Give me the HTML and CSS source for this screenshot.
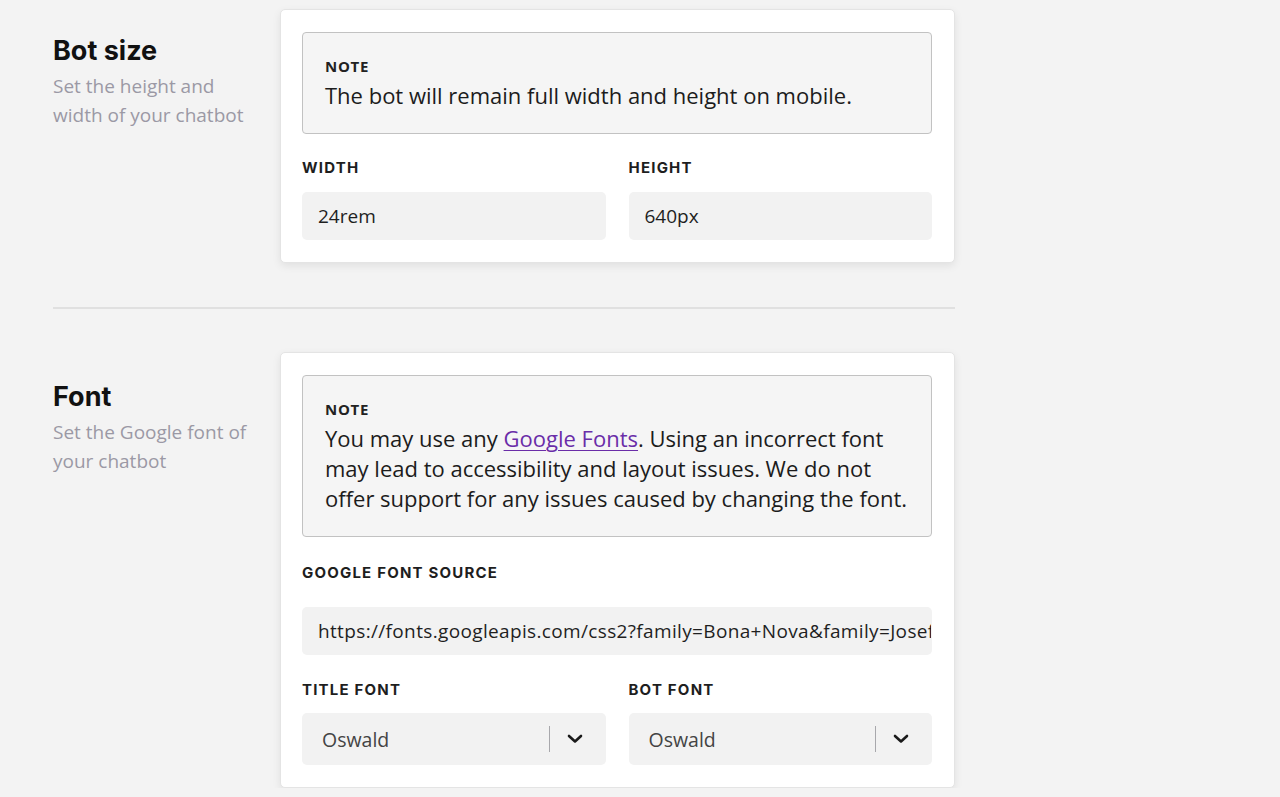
FILE: index.html
```html
<!DOCTYPE html>
<html lang="en">
<head>
<meta charset="utf-8">
<title>Chatbot settings</title>
<link rel="stylesheet" href="styles.css">
</head>
<body>
<main class="page">
  <section class="section section-first">
    <div class="intro">
      <h2 class="intro-title">Bot size</h2>
      <p class="intro-text">Set the height and width of your chatbot</p>
    </div>
    <div class="card">
      <div class="note">
        <div class="note-label">NOTE</div>
        <div class="note-text">The bot will remain full width and height on mobile.</div>
      </div>
      <div class="row row-size">
        <div class="field">
          <label class="label label-tight">WIDTH</label>
          <input class="input" type="text" value="24rem">
        </div>
        <div class="field">
          <label class="label label-tight">HEIGHT</label>
          <input class="input" type="text" value="640px">
        </div>
      </div>
    </div>
  </section>

  <hr class="divider">

  <section class="section section-second">
    <div class="intro intro-second">
      <h2 class="intro-title">Font</h2>
      <p class="intro-text">Set the Google font of your chatbot</p>
    </div>
    <div class="card">
      <div class="note">
        <div class="note-label">NOTE</div>
        <div class="note-text">You may use any <a class="link" href="#">Google Fonts</a>. Using an incorrect font may lead to accessibility and layout issues. We do not offer support for any issues caused by changing the font.</div>
      </div>
      <div class="field field-full">
        <label class="label label-url">GOOGLE FONT SOURCE</label>
        <input class="input input-url" type="text" value="https://fonts.googleapis.com/css2?family=Bona+Nova&family=Josefin+Sans&display=swap">
      </div>
      <div class="row row-fonts">
        <div class="field">
          <label class="label label-select">TITLE FONT</label>
          <div class="select">
            <span class="select-value">Oswald</span>
            <span class="select-sep"></span>
            <svg class="chevron" width="16" height="10" viewBox="0 0 16 10"><path d="M2 2l6 5.5L14 2" fill="none" stroke="#1a1a1a" stroke-width="2.6" stroke-linecap="round" stroke-linejoin="round"/></svg>
          </div>
        </div>
        <div class="field">
          <label class="label label-select">BOT FONT</label>
          <div class="select">
            <span class="select-value">Oswald</span>
            <span class="select-sep"></span>
            <svg class="chevron" width="16" height="10" viewBox="0 0 16 10"><path d="M2 2l6 5.5L14 2" fill="none" stroke="#1a1a1a" stroke-width="2.6" stroke-linecap="round" stroke-linejoin="round"/></svg>
          </div>
        </div>
      </div>
    </div>
  </section>
</main>
</body>
</html>
```

FILE: styles.css
```css
* { box-sizing: border-box; }

html, body {
  margin: 0;
  padding: 0;
  background: #f3f3f3;
  font-family: "Open Sans", "Noto Sans", sans-serif;
  color: #1f1f1f;
}

.page {
  padding: 9px 0 0 53px;
  width: 955px;
}

.section {
  display: grid;
  grid-template-columns: 227px 675px;
}

.intro {
  padding-top: 26px;
}

.intro-second {
  padding-top: 29px;
}

.intro-title {
  margin: 0;
  font-family: "Inter", "Noto Sans", sans-serif;
  font-weight: 700;
  font-size: 27px;
  line-height: 32px;
  letter-spacing: 0;
  color: #111;
}

.intro-text {
  margin: 5px 0 0;
  font-size: 19px;
  line-height: 29px;
  color: #9b99a5;
  max-width: 205px;
}

.card {
  background: #fff;
  border: 1px solid #e4e4e4;
  border-radius: 5px;
  box-shadow: 0 3px 8px rgba(0, 0, 0, 0.08);
  padding: 22px 22px 22px 21px;
}

.note {
  background: #f5f5f5;
  border: 1px solid #c2c2c2;
  border-radius: 4px;
  padding: 23px 22px 23px 22px;
}

.note-label {
  font-size: 15px;
  line-height: 20px;
  font-weight: 700;
  letter-spacing: 0.7px;
  color: #222;
  margin-bottom: 4px;
}

.note-text {
  font-size: 22px;
  line-height: 30px;
  color: #1c1c1c;
}

.link {
  color: #6a2da8;
  text-decoration: underline;
  text-underline-offset: 3px;
  text-decoration-thickness: 1px;
}

.row {
  display: grid;
  grid-template-columns: 1fr 1fr;
  column-gap: 23px;
}

.row-size {
  margin-top: 24px;
}

.field-full {
  margin-top: 26px;
}

.row-fonts {
  margin-top: 25px;
}

.field {
  display: flex;
  flex-direction: column;
}

.label {
  font-family: "Inter", "Noto Sans", sans-serif;
  font-size: 15px;
  line-height: 20px;
  font-weight: 700;
  letter-spacing: 1.2px;
  color: #1e1e1e;
}

.label-tight {
  margin-bottom: 14px;
}

.label-url {
  margin-bottom: 24px;
}

.label-select {
  margin-bottom: 13px;
}

.input {
  display: block;
  width: 100%;
  height: 48px;
  border: none;
  border-radius: 5px;
  background: #f2f2f2;
  padding: 0 16px;
  font-family: "Open Sans", "Noto Sans", sans-serif;
  font-size: 19px;
  color: #1f1f1f;
  outline: none;
}

.input-url {
  padding-right: 1px;
  letter-spacing: 0.35px;
}

.select {
  display: flex;
  align-items: center;
  height: 52px;
  border-radius: 5px;
  background: #f2f2f2;
  padding: 0 23px 0 20px;
}

.select-value {
  flex: 1;
  font-size: 19.5px;
  color: #444;
}

.select-sep {
  width: 1px;
  height: 26px;
  background: #a8a8ac;
  margin-right: 17px;
}

.chevron {
  display: block;
}

.divider {
  border: none;
  height: 2px;
  background: #e0e0e0;
  margin: 44px 0 43px;
  width: 902px;
}
```
